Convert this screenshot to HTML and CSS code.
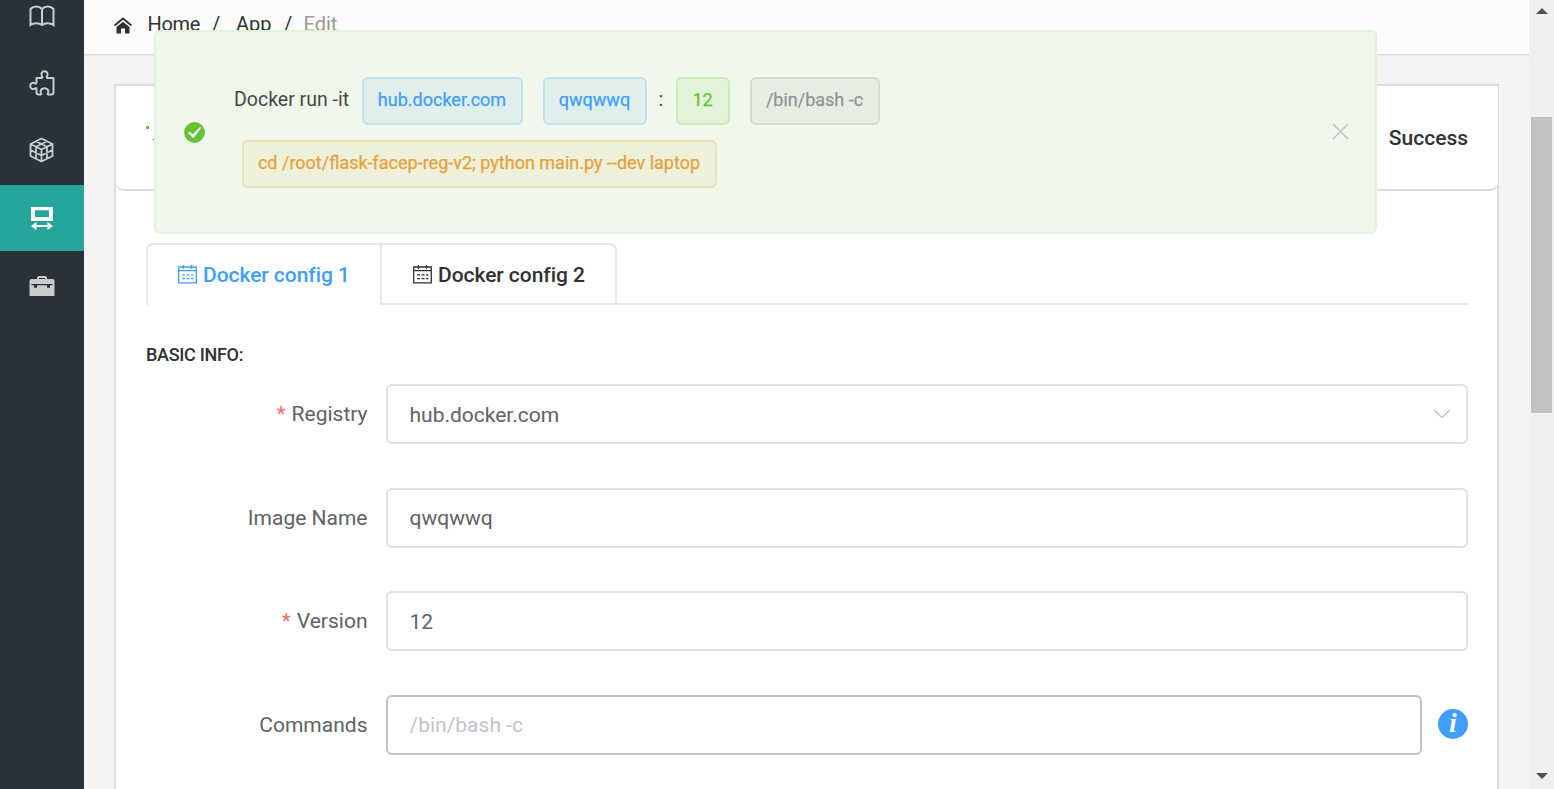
FILE: index.html
```html
<!DOCTYPE html>
<html lang="en">
<head>
<meta charset="utf-8">
<title>Edit App</title>
<link rel="stylesheet" href="styles.css">
</head>
<body>
<div class="app">
  <nav class="sidebar">
    <a class="nav-item"><svg width="26" height="22" viewBox="0 0 26 22" fill="none" stroke="#c9cdce" stroke-width="2"><path d="M13 4C10 .5 4.500.5 1.500 4V20C4.500 17.500 10 17.500 13 20C16 17.500 21.500 17.500 24.500 20V4C21.500.5 16 .5 13 4V20"/></svg></a>
    <a class="nav-item"><svg width="26" height="26" viewBox="0 0 26 26" fill="none" stroke="#c9cdce" stroke-width="2" stroke-linejoin="round"><path d="M7.500 8H12.500Q13.700 8 13 6.500C11.500 3.500 13 1.200 15.500 1.200S19.500 3.500 18 6.500Q17.300 8 18.500 8H24.500V22.500Q24.500 24.500 22.500 24.500H19.500Q18.300 24.500 19 23C20.300 20 18 18.300 15.500 18.300S10.700 20 12 23Q12.700 24.500 11.500 24.500H9.500Q7.500 24.500 7.500 22.500V19Q7.500 17.700 6 18.500C3.500 20 1.200 18.500 1.200 16S3.500 12 6 13.300Q7.500 14 7.500 12.800Z"/></svg></a>
    <a class="nav-item cube"><svg width="25" height="26" viewBox="0 0 25 26" fill="none" stroke="#c9cdce" stroke-width="1.800" stroke-linejoin="round"><path d="M12.500 1.500L23.500 7V19L12.500 24.500L1.500 19V7ZM1.500 7L12.500 12.500L23.500 7M12.500 12.500V24.500M7 4.200L18 9.700V21.700M18 4.200L7 9.700V21.700M1.500 13L12.500 18.500L23.500 13"/></svg></a>
    <a class="nav-item active"><svg width="22" height="24" viewBox="0 0 22 24"><path fill="#fff" fill-rule="evenodd" d="M0 0H22V14H0ZM4 3.200V10H18V3.200Z"/><path fill="#fff" d="M0 19L5.500 15V18H16.500V15L22 19L16.500 23V20H5.500V23Z"/></svg></a>
    <a class="nav-item"><svg width="26" height="20" viewBox="0 0 26 20"><path fill="#c9cdce" fill-rule="evenodd" d="M8 3V2Q8 0 10 0H16Q18 0 18 2V3H23.500Q25.500 3 25.500 5V20H.5V5Q.5 3 2.500 3ZM10 2V3H16V2Z"/><path fill="#283238" d="M2.500 8H23.500V9.300H21V11.800H18V9.300H8V11.800H5V9.300H2.500Z"/></svg></a>
  </nav>
  <div class="main">
    <header class="topbar">
      <svg class="home" width="18" height="17" viewBox="0 0 18 17"><path fill="none" stroke="#303133" stroke-width="2" d="M.6 8.500L9 1.500L17.400 8.500"/><path fill="#303133" d="M9 4.700L15.500 10V16.500H11V11.500H7V16.500H2.500V10Z"/></svg>
      <span class="crumb c-home">Home</span><span class="sep s1">/</span><span class="crumb c-app">App</span><span class="sep s2">/</span><span class="crumb last">Edit</span>
    </header>
    <section class="card">
      <div class="steps">
        <svg width="14" height="22" viewBox="0 0 14 22"><path fill="#67c23a" d="M0 0H3V3H0ZM6 13H9V15H8Z"/></svg>
        <span class="status">Success</span>
      </div>
      <div class="content">
        <div class="tabs">
          <div class="tab current"><svg class="cal" width="19" height="19" viewBox="0 0 19 19"><path fill="none" stroke="currentColor" stroke-width="1.300" d="M.7 2H18.300V17.800H.7ZM.7 5.700H18.300M5.500 0V4M13.500 0V4"/><path stroke="currentColor" stroke-width="1.300" stroke-dasharray="3 1.500" d="M4 9.800H15.500M4 13.700H15.500"/></svg><span>Docker config 1</span></div>
          <div class="tab"><svg class="cal" width="19" height="19" viewBox="0 0 19 19"><path fill="none" stroke="currentColor" stroke-width="1.300" d="M.7 2H18.300V17.800H.7ZM.7 5.700H18.300M5.500 0V4M13.500 0V4"/><path stroke="currentColor" stroke-width="1.300" stroke-dasharray="3 1.500" d="M4 9.800H15.500M4 13.700H15.500"/></svg><span>Docker config 2</span></div>
          <div class="tab-rest"></div>
        </div>
        <h2 class="group-title">BASIC INFO:</h2>
        <div class="form">
          <label class="label"><span class="req">*</span>Registry</label>
          <div class="input"><span>hub.docker.com</span><svg width="18" height="10" viewBox="0 0 18 10" fill="none" stroke="#c0c4cc" stroke-width="1.500"><path d="M1.200 1L9 8.500L16.800 1"/></svg></div>
          <label class="label"><span>Image Name</span></label>
          <div class="input even"><span>qwqwwq</span></div>
          <label class="label"><span class="req">*</span>Version</label>
          <div class="input"><span>12</span></div>
          <label class="label">Commands</label>
          <div class="with-info"><div class="input even hovered"><span>/bin/bash -c</span></div><span class="info">i</span></div>
        </div>
      </div>
    </section>
  </div>
  <div class="scrollbar">
    <svg width="12" height="6" viewBox="0 0 12 6"><path fill="#505050" d="M0 6L6 0L12 6Z"/></svg>
    <div class="thumb"></div>
    <svg class="down" width="12" height="6" viewBox="0 0 12 6"><path fill="#505050" d="M0 0L6 6L12 0Z"/></svg>
  </div>
</div>
<div class="message">
  <svg class="ok" width="21" height="21" viewBox="0 0 21 21"><circle cx="10.500" cy="10.500" r="10.400" fill="#67c23a"/><path fill="#f0f8ec" d="M3.800 11L5.300 9.500L9 12.300L16 5L17 6L9.500 16.200Z"/></svg>
  <div class="command">
    <div class="line"><span class="cmd">Docker run -it</span><span class="tag blue hub">hub.docker.com</span><span class="tag blue img">qwqwwq</span><span class="colon">:</span><span class="tag green">12</span><span class="tag gray">/bin/bash -c</span></div>
    <div class="line"><span class="tag orange">cd /root/flask-facep-reg-v2; python main.py --dev laptop</span></div>
  </div>
  <svg class="close" width="17" height="17" viewBox="0 0 17 17" stroke="#c0c4cc" stroke-width="1.700"><path d="M1 1L16 16M16 1L1 16"/></svg>
</div>
</body>
</html>
```
FILE: styles.css
```css
* { box-sizing: border-box; }
body { margin: 0; height: 789px; overflow: hidden; font-family: Roboto, "Liberation Sans", sans-serif; color: #303133; background: #f4f4f4; }
svg { display: block; flex: none; }
span { white-space: nowrap; }
.app { display: flex; height: 789px; overflow: hidden; }
.sidebar { width: 84px; flex: none; background: #283238; overflow: hidden; display: flex; flex-direction: column; }
.nav-item { height: 67px; flex: none; display: flex; align-items: center; justify-content: center; }
.nav-item:first-child { margin-top: -18px; }
.nav-item.cube { height: 69px; padding: 0 2px 2px 0; }
.nav-item.active { height: 66px; padding-top: 2px; background: #26a69a; }
.nav-item:last-child { height: 70px; }
.main { flex: 1; min-width: 0; height: 789px; overflow: hidden; }
.topbar { height: 55px; background: #fcfcfc; border-bottom: 1px solid #d8d8d8; display: flex; align-items: flex-start; padding: 12px 0 0 30px; font-size: 20px; line-height: 24px; box-shadow: 0 1px 1px #e9e9e9; }
.home { margin: 5px 15.500px 0 0; }
.crumb.c-home { width: 53.500px; letter-spacing: -.3px; }
.sep { width: 8px; margin: 0 11px; }
.sep.s1 { margin-right: 16px; }
.crumb.c-app { width: 35px; }
.sep.s2 { margin: 0 11.500px 0 13px; }
.crumb.last { color: #999; }
.card { margin: 29px 30px 0; height: 800px; background: #fff; border: 2px solid #dcdcdc; }
.steps { height: 105px; margin-right: -1px; border-bottom: 2px solid #dcdcdc; border-radius: 0 0 8px 8px; display: flex; align-items: flex-start; justify-content: space-between; padding: 40px 30px 0 30px; background: #fff; }
.status { font-size: 21px; line-height: 24px; font-weight: 500; }
.content { padding: 52px 29px 0 30px; }
.tabs { display: flex; height: 62px; }
.tab { width: 237px; border: 2px solid #e4e7ed; border-radius: 0 7px 0 0; display: flex; align-items: center; padding: 2px 0 0 31px; gap: 6px; font-size: 21px; font-weight: 500; letter-spacing: -.05px; }
.tab.current { width: 234px; color: #409eff; border-right: 0; border-bottom: 0; border-radius: 7px 0 0 0; padding: 0 0 0 30px; }
.tab .cal { position: relative; top: -1px; }
.tab-rest { flex: 1; border-bottom: 2px solid #e4e7ed; }
.group-title { margin: 38px 0 0; height: 24px; font-size: 18px; line-height: 24px; font-weight: 500; letter-spacing: -.3px; }
.form { margin-top: 17px; display: grid; grid-template-columns: 221.500px 1082px; column-gap: 18.500px; grid-auto-rows: 60px; row-gap: 43.600px; }
.label { font-size: 21px; line-height: 60px; color: #606266; text-align: right; white-space: nowrap; }
.req { color: #f56c6c; margin-right: 6px; }
.input { flex: 1; height: 60px; border: 2px solid #dcdfe6; border-radius: 6px; padding: 1px 15px 0 21.500px; display: flex; align-items: center; justify-content: space-between; font-size: 21px; color: #606266; background: #fff; }
.input svg { margin-top: -2px; }
.input.even { padding-top: 0; }
.input.hovered { border-color: #c0c4cc; color: #c0c4cc; }
.with-info { display: flex; gap: 16px; align-items: center; }
.info { width: 30px; height: 30px; margin-top: -2px; border-radius: 50%; background: #409eff; color: #fff; font: italic bold 28px/28px "Liberation Serif", serif; text-align: center; }
.scrollbar { width: 25px; flex: none; background: #f0f0f0; display: flex; flex-direction: column; align-items: center; padding: 8px 0 10px; }
.thumb { width: 21px; height: 296px; margin-top: 103px; background: #c1c1c1; }
.down { margin-top: auto; }
.message { position: absolute; left: 153.500px; top: 30px; width: 1223px; height: 204px; border: 2px solid #e1f3d8; border-radius: 6px; background: #f0f8ec; display: flex; align-items: center; padding: 0 26px 0 28.500px; }
.command { flex: 1; margin-left: 29px; display: flex; flex-direction: column; gap: 15px; }
.line { height: 48px; display: flex; align-items: center; font-size: 19.500px; }
.cmd { width: 127.500px; padding-bottom: 3px; color: #454746; }
.tag { height: 48px; padding-bottom: 3px; border: 2px solid; border-radius: 6px; display: flex; align-items: center; justify-content: center; font-size: 18px; -webkit-text-stroke: .25px currentColor; }
.blue { color: #409eff; background: #e0efeb; border-color: #c0e0f4; }
.hub { width: 161px; }
.img { width: 104px; margin-left: 20px; }
.colon { width: 29px; padding: 0 0 3px 12px; color: #454746; }
.green { width: 54px; color: #67c23a; background: #e3f3da; border-color: #c9ebb8; }
.gray { width: 130px; margin-left: 20px; color: #909399; background: #e6eee3; border-color: #d2dbd1; }
.orange { width: 475px; margin-left: 7.500px; color: #e6a23c; background: #eff0d9; border-color: #eddfb9; }
.close { margin-top: -1px; }
```
